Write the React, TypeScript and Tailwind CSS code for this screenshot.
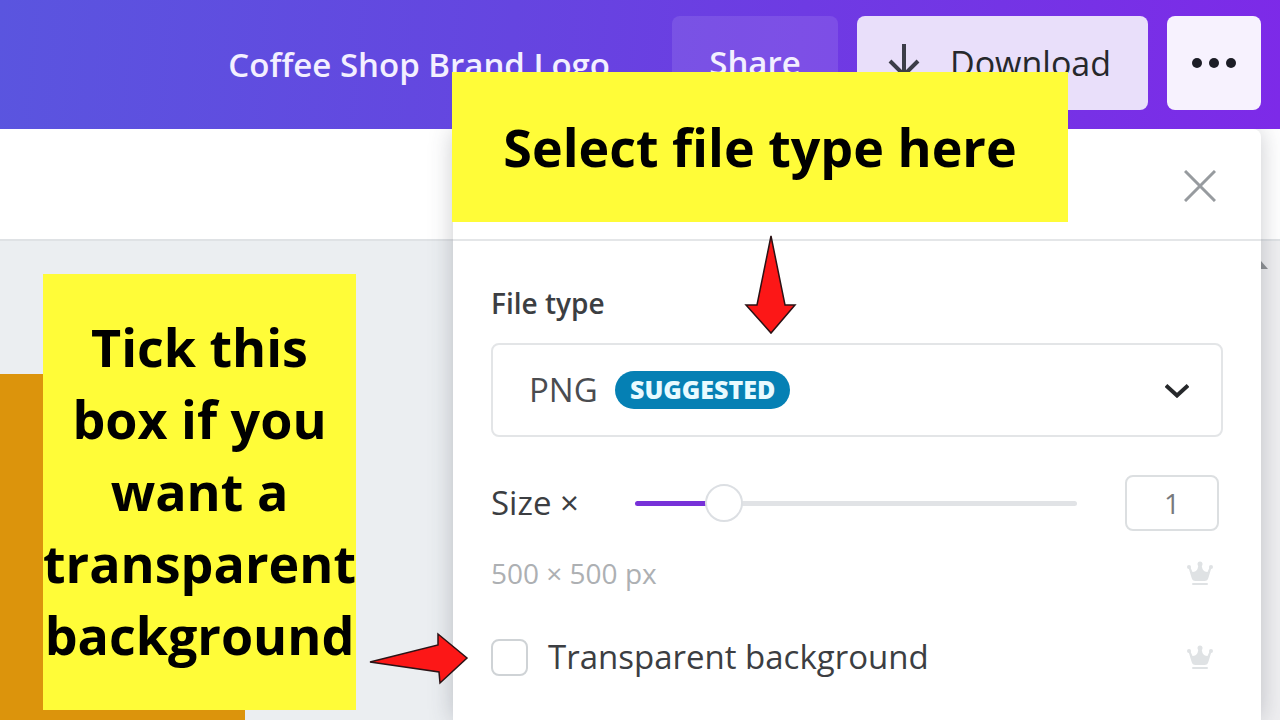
import { useState } from "react";

function Crown() {
  return (
    <svg viewBox="0 0 26 24" className="h-6 w-[26px] shrink-0 fill-[#dfe2e4]">
      <circle cx="2" cy="6" r="2" />
      <circle cx="13" cy="3" r="2.5" />
      <circle cx="24" cy="6" r="2" />
      <path d="M1.500 6.500L4.500 16.500q.8 3.500 4 3.500h9q3.200 0 4-3.500l3-10-1.500-1-2.500 5.500q-3.500 0-5-3L14.500 4h-3L10.500 8q-1.500 3-5 3L3 5.500z" />
      <rect x="5" y="22" width="16" height="2" rx="1" />
    </svg>
  );
}

export default function App() {
  const [size, setSize] = useState(1);
  const [transparent, setTransparent] = useState(false);
  const filled = ((size - 0.5) / 2.9) * 100;

  return (
    <div className="relative flex h-screen flex-col overflow-hidden bg-[#ebeef1] font-['Open_Sans',sans-serif] text-[#26282b]">
      <header className="flex h-[129px] shrink-0 items-start justify-end gap-[19px] bg-linear-[95deg,#5a55df,#6545e0_40%,#7d2ae8] px-[19px] pt-4">
        <h1 className="mr-[43px] py-[29px] text-[33px] leading-10 font-semibold text-[#f3efff]">
          Coffee Shop Brand Logo
        </h1>
        <button className="h-[94px] w-[166px] rounded-lg bg-white/10 text-[33px] font-semibold text-[#f3efff]">
          Share
        </button>
        <button className="flex h-[94px] w-[291px] items-center gap-[30px] rounded-lg bg-[#e9dffa] pl-[31px] text-[34px] font-medium">
          <svg viewBox="0 0 32 40" className="h-10 w-8 fill-none stroke-[#3c3d48] stroke-[4]">
            <path d="M16 1v34M2 18l14 14 14-14" />
          </svg>
          Download
        </button>
        <button aria-label="More" className="flex h-[94px] w-[94px] items-center justify-center rounded-lg bg-[#f7f2fe]">
          <svg viewBox="0 0 44 10" className="h-[10px] w-11 fill-[#1c1d26]">
            <circle cx="5" cy="5" r="5" />
            <circle cx="22" cy="5" r="5" />
            <circle cx="39" cy="5" r="5" />
          </svg>
        </button>
      </header>

      <div className="h-28 shrink-0 border-b-2 border-[#dfe2e5] bg-white"></div>

      <main className="flex flex-1 justify-between">
        <div className="mt-[133px] w-[245px] bg-[#dc940c]"></div>
        <div className="w-[26px] bg-[#efeff1] pt-5">
          <svg viewBox="0 0 14 8" className="h-2 w-[14px] fill-[#8e9194]">
            <path d="M7 0l7 8H0z" />
          </svg>
        </div>
      </main>

      {/* download panel */}
      <section className="absolute top-[129px] right-[19px] bottom-0 w-[808px] rounded-t-lg bg-white shadow-[0_0_24px_rgba(60,65,80,0.28)] [clip-path:inset(0_-40px_-40px_-40px)]">
        <div className="flex h-28 items-center justify-end border-b-2 border-[#e4e6e8] pt-1 pr-[45px]">
          <button aria-label="Close">
            <svg viewBox="0 0 32 32" className="size-8 fill-none stroke-[#979b9f] stroke-3">
              <path d="M1 1l30 30M31 1L1 31" />
            </svg>
          </button>
        </div>

        <div className="flex flex-col px-[38px] pt-[42px]">
          <label htmlFor="type" className="text-[28px] leading-10 font-semibold text-[#3c3e42]">
            File type
          </label>
          <div className="relative mt-5 flex items-center">
            <select id="type" className="h-[94px] w-full appearance-none rounded-lg border-2 border-[#e3e5e7] bg-white px-9 text-[33px] text-[#4a4c50]">
              <option>PNG</option>
              <option>JPG</option>
              <option>PDF</option>
            </select>
            <span className="pointer-events-none absolute left-[124px] flex h-[38px] items-center rounded-full bg-[#0580b4] px-[15px] text-[25px] font-extrabold text-[#e8faff]">
              SUGGESTED
            </span>
            <svg viewBox="0 0 24 16" className="pointer-events-none absolute right-[34px] h-4 w-6 fill-none stroke-[#26282b] stroke-4">
              <path d="M1 3.500l11 10 11-10" />
            </svg>
          </div>

          <div className="mt-[38px] flex items-center pr-1">
            <label htmlFor="size" className="w-36 text-[33px] text-[#3c3e42]">
              Size ×
            </label>
            <input
              id="size"
              type="range"
              min={0.5}
              max={3.4}
              step={0.1}
              value={size}
              onChange={(e) => setSize(Number(e.target.value))}
              className="h-[38px] min-w-0 flex-1 appearance-none bg-transparent [&::-webkit-slider-runnable-track]:h-[5px] [&::-webkit-slider-runnable-track]:rounded-full [&::-webkit-slider-runnable-track]:[background:linear-gradient(90deg,#7731d8_var(--filled),#e1e3e6_var(--filled))] [&::-webkit-slider-thumb]:-mt-[17px] [&::-webkit-slider-thumb]:size-[38px] [&::-webkit-slider-thumb]:appearance-none [&::-webkit-slider-thumb]:rounded-full [&::-webkit-slider-thumb]:border-2 [&::-webkit-slider-thumb]:border-[#dcdfe3] [&::-webkit-slider-thumb]:bg-white"
              style={{ "--filled": `${filled}%` } as React.CSSProperties}
            />
            <input
              aria-label="Size multiplier"
              type="text"
              value={size}
              onChange={(e) => setSize(Number(e.target.value) || 1)}
              className="ml-12 h-14 w-[94px] rounded-lg border-2 border-[#dcdfe1] text-center text-[28px] text-[#77797d]"
            />
          </div>

          <div className="mt-[22px] flex items-center justify-between pr-[10px]">
            <p className="text-[28px] leading-10 text-[#adb0b3]">500 × 500 px</p>
            <Crown />
          </div>

          <div className="mt-11 flex items-center justify-between pr-[10px]">
            <label className="flex items-center gap-5 text-[33px] leading-10 text-[#3c3e42]">
              <input
                type="checkbox"
                checked={transparent}
                onChange={(e) => setTransparent(e.target.checked)}
                className="size-[37px] appearance-none rounded-lg border-2 border-[#cfd3d6] bg-white checked:bg-[#7731d8]"
              />
              Transparent background
            </label>
            <Crown />
          </div>
        </div>
      </section>

      {/* notes */}
      <p className="absolute top-[72px] right-[212px] flex h-[150px] w-[616px] items-center justify-center bg-[#fffc38] text-[52px] font-bold text-black">
        Select file type here
      </p>
      <p className="absolute top-[274px] left-[43px] flex h-[436px] w-[313px] items-center justify-center bg-[#fffc38] pb-0.5 text-center text-[52px] leading-[72px] font-bold text-black">
        Tick this
        <br />
        box if you
        <br />
        want a
        <br />
        transparent
        <br />
        background
      </p>
      <svg viewBox="0 0 54 102" className="absolute top-[233px] right-[482px] h-[102px] w-[54px] fill-[#fc1717] stroke-[#2b1215] stroke-[1.500]">
        <path d="M27 3l14 69h10L27 100 2 72h11z" />
      </svg>
      <svg viewBox="0 0 102 54" className="absolute top-[632px] left-[367px] h-[54px] w-[102px] fill-[#fc1717] stroke-[#2b1215] stroke-[1.500]">
        <path d="M3 30l68-17V2l29 24-27 25-1-11z" />
      </svg>
    </div>
  );
}
